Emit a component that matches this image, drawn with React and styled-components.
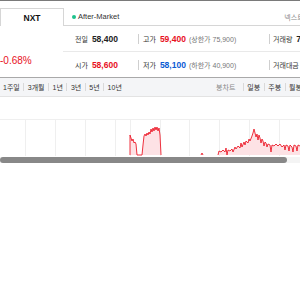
import React from "react";
import styled, { createGlobalStyle } from "styled-components";

const GlobalStyle = createGlobalStyle`
  html, body {
    margin: 0;
    padding: 0;
    background: #fff;
    overflow: hidden;
  }
  body {
    font-family: "Liberation Sans", "Noto Sans CJK KR", sans-serif;
    color: #222;
  }
`;

const Page = styled.div`
  width: 312px;
  overflow: hidden;
`;

const TopRule = styled.div`
  height: 1px;
  background: #7a7a7a;
`;

const Header = styled.div`
  display: flex;
  align-items: flex-end;
  height: 25px;
`;

const Tab = styled.div`
  box-sizing: border-box;
  flex: 0 0 64px;
  height: 18px;
  border: 1px solid #d6d6d6;
  border-bottom: none;
  display: flex;
  align-items: center;
  justify-content: center;
  font-size: 8.5px;
  font-weight: 700;
  color: #111;
`;

const Market = styled.div`
  flex: 1;
  min-width: 0;
  box-sizing: border-box;
  height: 18px;
  border-bottom: 1px solid #d6d6d6;
  display: flex;
  align-items: center;
  padding-left: 8px;
  white-space: nowrap;
  overflow: hidden;
`;

const Dot = styled.span`
  flex: 0 0 4px;
  height: 4px;
  border-radius: 50%;
  background: #1dc28c;
  margin-right: 2px;
`;

const MarketName = styled.span`
  font-size: 7.5px;
  color: #333;
`;

const Source = styled.span`
  margin-left: 165px;
  font-size: 7px;
  color: #888;
`;

const Quote = styled.div`
  display: flex;
  height: 51px;
`;

const Side = styled.div`
  flex: 0 0 63px;
  display: flex;
  flex-direction: column;
  justify-content: flex-end;
`;

const Change = styled.div`
  height: 25px;
  display: flex;
  align-items: center;
  font-size: 10px;
  color: ${(p) => p.$color};
  padding-bottom: 4px;
`;

const Rows = styled.div`
  flex: 1;
  min-width: 0;
  display: flex;
  flex-direction: column;
`;

const Row = styled.div`
  height: 25px;
  display: grid;
  grid-template-columns: 75px 131px 1fr;
  align-items: center;
  border-bottom: ${(p) => (p.$line ? "1px solid #e9e9e9" : "none")};
  white-space: nowrap;
`;

const Cell = styled.div`
  position: relative;
  display: flex;
  align-items: center;
  padding-left: ${(p) => (p.$first ? "12px" : p.$last ? "4px" : "5px")};

  &::before {
    content: "";
    display: ${(p) => (p.$first ? "none" : "block")};
    position: absolute;
    left: 0;
    top: 50%;
    margin-top: -5px;
    width: 1px;
    height: 10px;
    background: #cfcfcf;
  }
`;

const Label = styled.span`
  font-size: 7px;
  color: #333;
  margin-right: 4px;
`;

const Value = styled.span`
  font-size: 8.5px;
  font-weight: 700;
  color: ${(p) => p.$color || "#222"};
`;

const Note = styled.span`
  font-size: 7px;
  color: #777;
  margin-left: 3px;
`;

const PeriodBar = styled.div`
  box-sizing: border-box;
  height: 20px;
  border-top: 1px solid #a9a9a9;
  border-bottom: 1px solid #e3e3e3;
  background: #f4f5f7;
  display: flex;
  align-items: center;
  padding: 0 10px 0 3px;
  white-space: nowrap;
`;

const Group = styled.div`
  display: flex;
  align-items: center;
  margin-left: ${(p) => (p.$right ? "auto" : "0")};
`;

const Item = styled.span`
  font-size: 7px;
  color: ${(p) => (p.$muted ? "#8a8a8a" : "#333")};
  margin-right: ${(p) => (p.$muted ? "4px" : "0")};
`;

const Sep = styled.span`
  width: 1px;
  height: 8px;
  background: #d9d9d9;
  margin: 0 3.5px;
`;

const ChartArea = styled.div`
  padding-top: 22px;
`;

const Plot = styled.svg`
  display: block;
`;

const Track = styled.div`
  margin-top: 1px;
  width: 300px;
  height: 6px;
  background: #f4f4f4;
  display: flex;
`;

const Thumb = styled.div`
  width: 287px;
  height: 6px;
  border-radius: 3px;
  background: #888;
`;

const periods = ["1주일", "3개월", "1년", "3년", "5년", "10년"];
const candles = ["일봉", "주봉", "월봉"];
const gridX = [25, 55, 85, 115, 130, 160, 189, 219, 249, 279];

// page coords, plot top = 119, base = 155
const bursts = [
  [
    [130, 155], [130, 135], [131, 138], [132, 141], [133, 139], [134, 143], [135, 142],
    [136, 144], [137, 155], [142, 155], [143, 145], [144, 136], [145, 134], [146, 136],
    [147, 133], [148, 135], [149, 132], [150, 134], [151, 129], [152, 132], [153, 128],
    [154, 131], [155, 127], [156, 130], [157, 127], [158, 131], [159, 128], [160, 135],
    [161, 155],
  ],
  [[201, 155], [202, 153], [203, 155]],
  [
    [218, 155], [219, 151], [221, 152], [223, 150], [225, 152], [226, 148], [227, 155],
    [228, 150], [230, 151], [232, 149], [233, 152], [235, 147], [236, 149], [238, 146],
    [240, 148], [241, 143], [242, 147], [244, 142], [245, 145], [246, 141], [248, 143],
    [249, 139], [250, 141], [252, 136], [253, 133], [254, 129], [255, 133], [256, 137],
    [257, 134], [258, 140], [259, 135], [260, 138], [261, 143], [262, 139], [263, 141],
    [264, 146], [265, 142], [266, 143], [267, 147], [268, 144], [270, 145], [271, 152],
    [272, 145], [274, 146], [276, 144], [278, 146], [280, 144], [282, 147], [284, 145],
    [285, 150], [286, 145], [288, 146], [289, 151], [290, 145], [292, 147], [293, 152],
    [294, 145], [296, 146], [297, 151], [298, 145], [300, 146],
  ],
];

function Chart() {
  const top = 119;
  const h = 37;
  return (
    <Plot width="300" height={h} viewBox={`0 ${top} 300 ${h}`}>
      <line x1="0" y1={top + 0.5} x2="300" y2={top + 0.5} stroke="#efefef" />
      {gridX.map((x) => (
        <line key={x} x1={x + 0.5} y1={top} x2={x + 0.5} y2={top + h} stroke="#efefef" />
      ))}
      {bursts.map((pts, i) => {
        const d = pts.map((p) => p.join(",")).join(" ");
        const last = pts[pts.length - 1];
        return (
          <g key={i}>
            <polygon points={`${d} ${last[0]},155 ${pts[0][0]},155`} fill="#fde2e5" />
            <polyline points={d} fill="none" stroke="#ec1c2a" strokeWidth="0.9" />
          </g>
        );
      })}
    </Plot>
  );
}

export default function App() {
  return (
    <Page>
      <GlobalStyle />
      <TopRule />
      <Header>
        <Tab>NXT</Tab>
        <Market>
          <Dot />
          <MarketName>After-Market</MarketName>
          <Source>넥스트레이드 기준</Source>
        </Market>
      </Header>
      <Quote>
        <Side>
          <Change $color="#e8101e">-0.68%</Change>
        </Side>
        <Rows>
          <Row $line>
            <Cell $first>
              <Label>전일</Label>
              <Value>58,400</Value>
            </Cell>
            <Cell>
              <Label>고가</Label>
              <Value $color="#e8101e">59,400</Value>
              <Note>(상한가 75,900)</Note>
            </Cell>
            <Cell $last>
              <Label>거래량</Label>
              <Value>7,312,400</Value>
            </Cell>
          </Row>
          <Row>
            <Cell $first>
              <Label>시가</Label>
              <Value $color="#e8101e">58,600</Value>
            </Cell>
            <Cell>
              <Label>저가</Label>
              <Value $color="#0a5bd3">58,100</Value>
              <Note>(하한가 40,900)</Note>
            </Cell>
            <Cell $last>
              <Label>거래대금</Label>
              <Value>426,815백만</Value>
            </Cell>
          </Row>
        </Rows>
      </Quote>
      <PeriodBar>
        <Group>
          {periods.map((p, i) => (
            <React.Fragment key={p}>
              {i > 0 && <Sep />}
              <Item>{p}</Item>
            </React.Fragment>
          ))}
        </Group>
        <Group $right>
          <Item $muted>봉차트</Item>
          <Sep />
          {candles.map((c, i) => (
            <React.Fragment key={c}>
              {i > 0 && <Sep />}
              <Item>{c}</Item>
            </React.Fragment>
          ))}
        </Group>
      </PeriodBar>
      <ChartArea>
        <Chart />
        <Track>
          <Thumb />
        </Track>
      </ChartArea>
    </Page>
  );
}
